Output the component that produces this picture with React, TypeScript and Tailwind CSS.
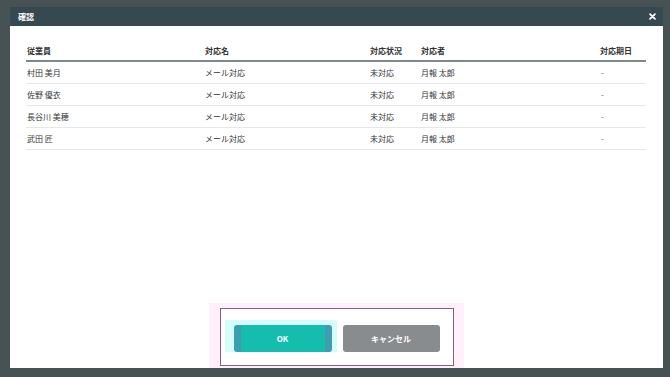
import React from "react";

const rows = [
  { name: "村田 美月", task: "メール対応", status: "未対応", person: "月報 太郎", due: "-" },
  { name: "佐野 優衣", task: "メール対応", status: "未対応", person: "月報 太郎", due: "-" },
  { name: "長谷川 美穂", task: "メール対応", status: "未対応", person: "月報 太郎", due: "-" },
  { name: "武田 匠", task: "メール対応", status: "未対応", person: "月報 太郎", due: "-" },
];

export default function App() {
  return (
    <div
      className="w-[670px] h-[377px] bg-[#475254] overflow-hidden pt-[7px] pl-[10px]"
      style={{ fontFamily: '"Noto Sans CJK JP", "Noto Sans", sans-serif' }}
    >
      <div className="w-[653px] h-[361px] flex flex-col bg-white">
        <div className="h-[19px] bg-[#374950] flex items-center justify-between pl-[8px] pr-[7px]">
          <span className="text-[8px] font-bold text-white leading-none">確認</span>
          <svg width="7" height="7" viewBox="0 0 10 10">
            <path d="M1.5 1.5 L8.5 8.5 M8.5 1.5 L1.5 8.5" stroke="#ffffff" strokeWidth="2.4" strokeLinecap="round" />
          </svg>
        </div>
        <div className="flex-1 flex flex-col pl-[16px] pr-[17px] pt-[16px]">
          <div className="text-[8px] text-[#333333]">
            <div className="grid grid-cols-[179px_165px_51px_179px_1fr] h-[20px] items-center font-bold border-b-2 border-[#7d8a8b]">
              <div className="pl-[1px]">従業員</div>
              <div>対応名</div>
              <div>対応状況</div>
              <div>対応者</div>
              <div>対応期日</div>
            </div>
            {rows.map((r, i) => (
              <div
                key={i}
                className="grid grid-cols-[179px_165px_51px_179px_1fr] h-[22px] items-center border-b border-[#e6e8e8]"
              >
                <div className="pl-[1px]">{r.name}</div>
                <div>{r.task}</div>
                <div>{r.status}</div>
                <div>{r.person}</div>
                <div className="pl-[1px] text-[#666]">{r.due}</div>
              </div>
            ))}
          </div>
          <div className="flex-1" />
          <div className="flex justify-center">
            <div className="w-[255px] h-[65px] bg-[#fff0fb] pt-[5px] pl-[11px]">
              <div className="w-[234px] h-[58px] border-[1.5px] border-[#8b5a82] bg-white flex items-start pt-[11px] pl-[4px] gap-[6px]">
                <div className="w-[112px] h-[32px] bg-[#d4fcfc] flex items-end pl-[9px] pr-[5px]">
                  <button className="w-[98px] h-[27px] rounded-[3px] bg-[linear-gradient(90deg,#3d9eb1_0px,#3d9eb1_7px,#14bdad_7px,#14bdad_91px,#3d9eb1_91px)] text-white text-[8px] font-bold">
                    OK
                  </button>
                </div>
                <button className="mt-[5px] w-[97px] h-[27px] rounded-[3px] bg-[#898c8f] text-white text-[8px] font-bold">
                  キャンセル
                </button>
              </div>
            </div>
          </div>
        </div>
      </div>
    </div>
  );
}
